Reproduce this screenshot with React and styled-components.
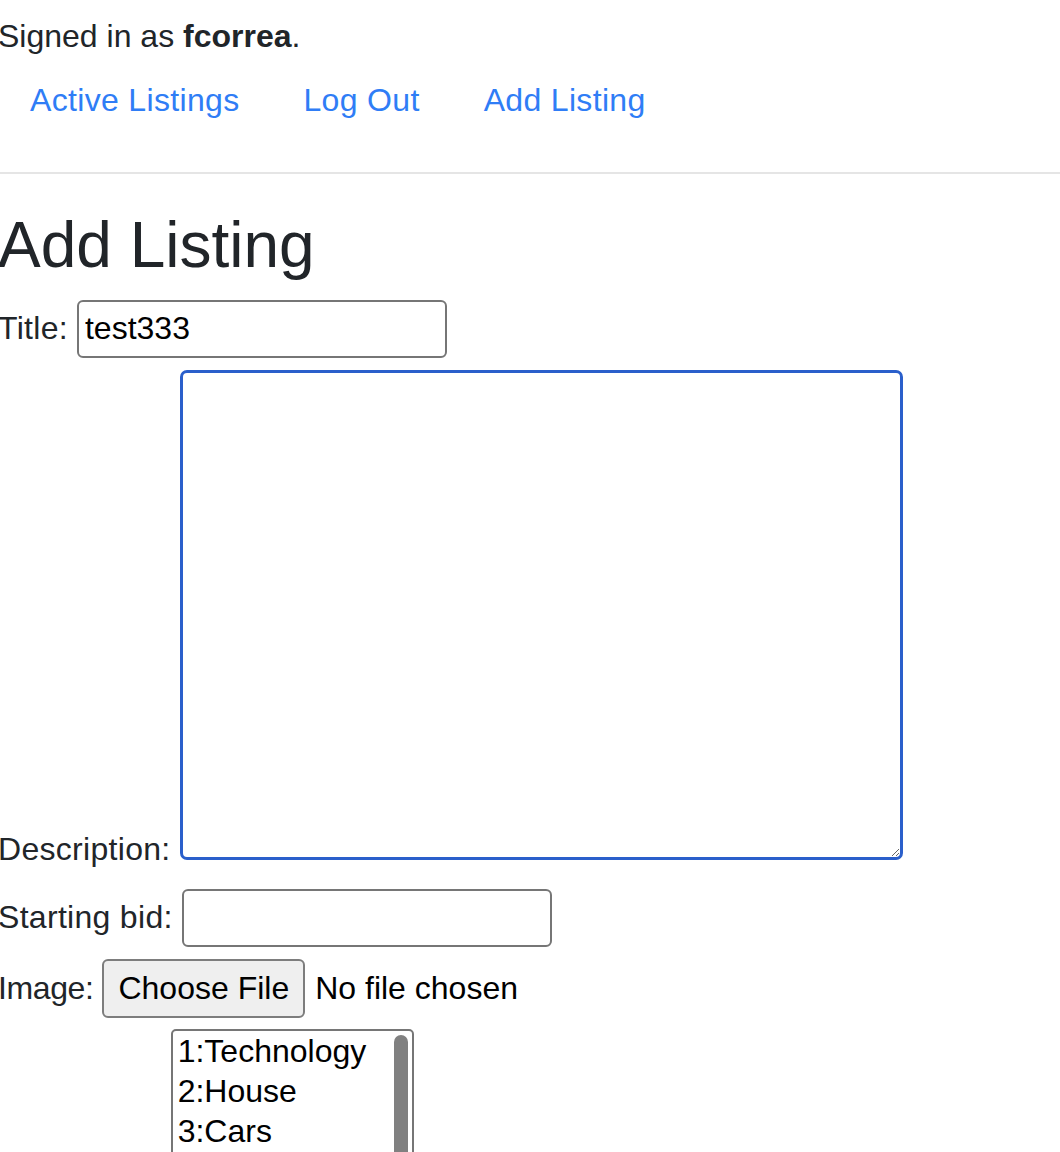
import React from 'react';
import styled, { createGlobalStyle, css } from 'styled-components';

const GlobalStyle = createGlobalStyle`
  html {
    overflow: hidden;
  }
  body {
    margin: 0;
    background: #fff;
    color: #212529;
    font-family: "Liberation Sans", Arial, sans-serif;
    font-size: 32px;
    line-height: 1.5;
  }
`;

const Page = styled.div`
  margin-left: -2px;
  padding-top: 12px;
`;

const SignedIn = styled.div`
  strong {
    font-weight: 700;
  }
`;

const Nav = styled.ul`
  display: flex;
  list-style: none;
  margin: 0;
  padding: 0;
`;

const NavLink = styled.a`
  display: block;
  padding: 16px 32px;
  color: #2f7df6;
  letter-spacing: 0.33px;
  text-decoration: none;
`;

const Divider = styled.hr`
  margin: 32px 0 33px;
  border: 0;
  border-top: 2px solid rgba(0, 0, 0, 0.1);
`;

const Heading = styled.h1`
  margin: 0 0 16px;
  font-size: 64px;
  font-weight: 500;
  line-height: 1.2;
`;

const Form = styled.form`
  display: flex;
  flex-direction: column;
  align-items: flex-start;
`;

const Field = styled.div`
  display: flex;
  align-items: ${(p) => (p.$bottom ? 'flex-end' : 'baseline')};
  gap: 9px;
  margin-top: ${(p) => p.$top || 0}px;
`;

const Label = styled.label`
  white-space: nowrap;
  letter-spacing: ${(p) => p.$spacing ?? 0.3}px;
  ${(p) =>
    p.$sink &&
    css`
      margin-bottom: -13px;
    `}
`;

const TextInput = styled.input`
  box-sizing: border-box;
  width: 370px;
  height: 58px;
  padding: 0 6px;
  border: 2px solid #767676;
  border-radius: 6px;
  font-family: inherit;
  font-size: 32px;
  line-height: normal;
  color: #000;
  background: #fff;
`;

const TextArea = styled.textarea`
  box-sizing: border-box;
  width: 723px;
  height: 490px;
  padding: 4px;
  border: 3px solid #2a5fcb;
  border-radius: 7px;
  outline: none;
  font-family: inherit;
  font-size: 32px;
  color: #000;
`;

const FileControl = styled.span`
  display: inline-flex;
  align-items: baseline;
  gap: 10px;
`;

const FileButton = styled.button`
  box-sizing: border-box;
  height: 59px;
  padding: 0 14px;
  border: 2px solid #7d7d7d;
  border-radius: 6px;
  background: #efefef;
  font-family: inherit;
  font-size: 32px;
  line-height: normal;
  color: #000;
`;

const FileStatus = styled.span`
  color: #000;
`;

const ListBox = styled.div`
  position: relative;
  box-sizing: border-box;
  width: 243px;
  height: 200px;
  padding-left: 5px;
  border: 2px solid #767676;
  border-radius: 5px;
  overflow: hidden;
  color: #000;
  background: #fff;
`;

const Option = styled.div`
  height: 40px;
  line-height: 40px;
  white-space: nowrap;
`;

const ScrollThumb = styled.span`
  position: absolute;
  top: 4px;
  right: 4px;
  width: 14px;
  height: 170px;
  border-radius: 7px;
  background: #808080;
`;

const categories = ['1:Technology', '2:House', '3:Cars', '4:Fashion', '5:Toys', '6:Others'];

export default function App() {
  return (
    <>
      <GlobalStyle />
      <Page>
        <SignedIn>
          Signed in as <strong>fcorrea</strong>.
        </SignedIn>
        <Nav>
          <li>
            <NavLink href="#">Active Listings</NavLink>
          </li>
          <li>
            <NavLink href="#">Log Out</NavLink>
          </li>
          <li>
            <NavLink href="#">Add Listing</NavLink>
          </li>
        </Nav>
        <Divider />
        <Heading>Add Listing</Heading>
        <Form onSubmit={(e) => e.preventDefault()}>
          <Field>
            <Label htmlFor="title">Title:</Label>
            <TextInput id="title" type="text" defaultValue="test333" />
          </Field>
          <Field $bottom $top={12}>
            <Label htmlFor="description" $sink>
              Description:
            </Label>
            <TextArea id="description" />
          </Field>
          <Field $top={29}>
            <Label htmlFor="bid">Starting bid:</Label>
            <TextInput id="bid" type="text" />
          </Field>
          <Field $top={12}>
            <Label $spacing={-0.4}>Image:</Label>
            <FileControl>
              <FileButton type="button">Choose File</FileButton>
              <FileStatus>No file chosen</FileStatus>
            </FileControl>
          </Field>
          <Field $bottom $top={11}>
            <Label $sink $spacing={0}>
              Categories:
            </Label>
            <ListBox role="listbox" aria-multiselectable="true">
              {categories.map((c) => (
                <Option key={c} role="option">
                  {c}
                </Option>
              ))}
              <ScrollThumb />
            </ListBox>
          </Field>
        </Form>
      </Page>
    </>
  );
}
